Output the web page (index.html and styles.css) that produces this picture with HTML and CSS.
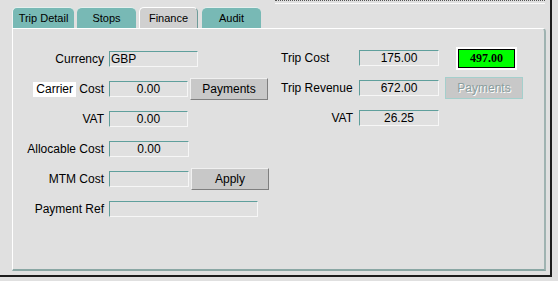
FILE: index.html
```html
<!DOCTYPE html>
<html lang="en">
<head>
<meta charset="UTF-8">
<title>Finance</title>
<link rel="stylesheet" href="styles.css">
</head>
<body>
<div class="canvas">
  <div class="topstrip">
    <div class="stub"></div>
  </div>
  <div class="tabs">
    <div class="tab tab-first">Trip Detail</div>
    <div class="tab">Stops</div>
    <div class="tab tab-active">Finance</div>
    <div class="tab">Audit</div>
  </div>
  <div class="panel">
    <div class="form">
      <div class="grid grid-left">
        <label class="lbl">Currency</label>
        <div class="cell"><div class="field field-left w89">GBP</div></div>

        <label class="lbl"><span class="hl">Carrier</span> Cost</label>
        <div class="cell"><div class="field w79">0.00</div><button class="btn">Payments</button></div>

        <label class="lbl">VAT</label>
        <div class="cell"><div class="field w79">0.00</div></div>

        <label class="lbl">Allocable Cost</label>
        <div class="cell"><div class="field w80">0.00</div></div>

        <label class="lbl">MTM Cost</label>
        <div class="cell"><div class="field w80"></div><button class="btn">Apply</button></div>

        <label class="lbl">Payment Ref</label>
        <div class="cell"><div class="field w149"></div></div>
      </div>

      <div class="grid grid-right">
        <label class="lbl lbl-start">Trip Cost</label>
        <div class="cell">
          <div class="field w80">175.00</div>
          <div class="margin-box"><div class="margin-val">497.00</div></div>
        </div>

        <label class="lbl lbl-start">Trip Revenue</label>
        <div class="cell"><div class="field w80">672.00</div><button class="btn btn-off" disabled>Payments</button></div>

        <label class="lbl">VAT</label>
        <div class="cell"><div class="field w80">26.25</div></div>
      </div>
    </div>
  </div>
</div>
</body>
</html>
```

FILE: styles.css
```css
body {
  margin: 0;
  background-color: #e0e0e0;
  font-family: "Liberation Sans", Arial, sans-serif;
  font-size: 12px;
  color: #000;
}
.canvas {
  width: 550px;
  height: 275px;
  border-right: 2px solid #1c1c1c;
  border-bottom: 2px solid #1c1c1c;
}
.topstrip {
  height: 7px;
  padding-left: 275px;
}
.stub {
  width: 270px;
  height: 2px;
  border-top: 1px dotted #555;
  border-bottom: 1px solid #fafafa;
}
.tabs {
  display: flex;
  gap: 3px;
  padding-left: 12px;
  height: 21px;
}
.tab {
  width: 59px;
  height: 21px;
  box-sizing: border-box;
  background-color: #78b9b5;
  border-top: 1px solid #e6efee;
  border-radius: 5px 5px 0 0;
  font-size: 11px;
  line-height: 21px;
  text-align: center;
}
.tab-first {
  width: 62px;
  border-left: 1px solid #f4f4f4;
}
.tab-active {
  margin-right: 1px;
  background-color: #d0d0d0;
  border-top: 1px solid #ffffff;
  border-left: 1px solid #ffffff;
  border-right: 1px solid #6e9c9a;
}
.panel {
  margin-left: 12px;
  width: 534px;
  height: 243px;
  box-sizing: border-box;
  border-top: 1px solid #ffffff;
  border-left: 1px solid #ffffff;
  border-right: 2px solid #9fb3b1;
  border-bottom: 2px solid #8aa7a4;
  border-radius: 0 4px 0 0;
  padding: 19px 0 0 1px;
}
.form {
  display: flex;
}
.grid {
  display: grid;
  grid-auto-rows: 22px;
  row-gap: 8px;
  column-gap: 3px;
  align-items: center;
}
.grid-left {
  grid-template-columns: 92px 166px;
}
.grid-right {
  margin-left: 6px;
  margin-top: -1px;
  grid-template-columns: 74px 190px;
  column-gap: 4px;
}
.lbl {
  text-align: right;
  padding-right: 2px;
  white-space: nowrap;
}
.lbl-start {
  text-align: left;
}
.hl {
  display: inline-block;
  background-color: #ffffff;
  padding: 1px 3px;
  line-height: 13px;
}
.cell {
  display: flex;
  align-items: center;
}
.field {
  height: 16px;
  box-sizing: border-box;
  border-top: 1px solid #5f9f9c;
  border-left: 1px solid #5f9f9c;
  border-right: 1px solid #f6f6f6;
  border-bottom: 1px solid #f6f6f6;
  background-color: #e0e0e0;
  line-height: 14px;
  text-align: center;
}
.field-left {
  text-align: left;
  padding-left: 1px;
}
.w79 { width: 79px; }
.w80 { width: 80px; }
.w89 { width: 89px; }
.w149 { width: 149px; }
.btn {
  margin-left: 2px;
  width: 78px;
  height: 22px;
  box-sizing: border-box;
  background-color: #c8c8c8;
  border-top: 1px solid #f0f0f0;
  border-left: 1px solid #f0f0f0;
  border-right: 1px solid #7f7f7f;
  border-bottom: 1px solid #7f7f7f;
  font-family: "Liberation Sans", Arial, sans-serif;
  font-size: 12px;
  color: #000;
  padding: 0;
}
.btn-off {
  margin-left: 6px;
  color: #8a9e9e;
  text-shadow: 1px 1px 0 #ffffff;
  border: 1px solid #a4cfcc;
}
.margin-box {
  margin-left: 17px;
  background-color: #ffffff;
  padding: 2px;
}
.margin-val {
  width: 57px;
  height: 19px;
  box-sizing: border-box;
  background-color: #00ff00;
  border: 1px solid #000;
  font-family: "Liberation Serif", "Times New Roman", serif;
  font-weight: bold;
  font-size: 12px;
  line-height: 17px;
  text-align: center;
}
```
